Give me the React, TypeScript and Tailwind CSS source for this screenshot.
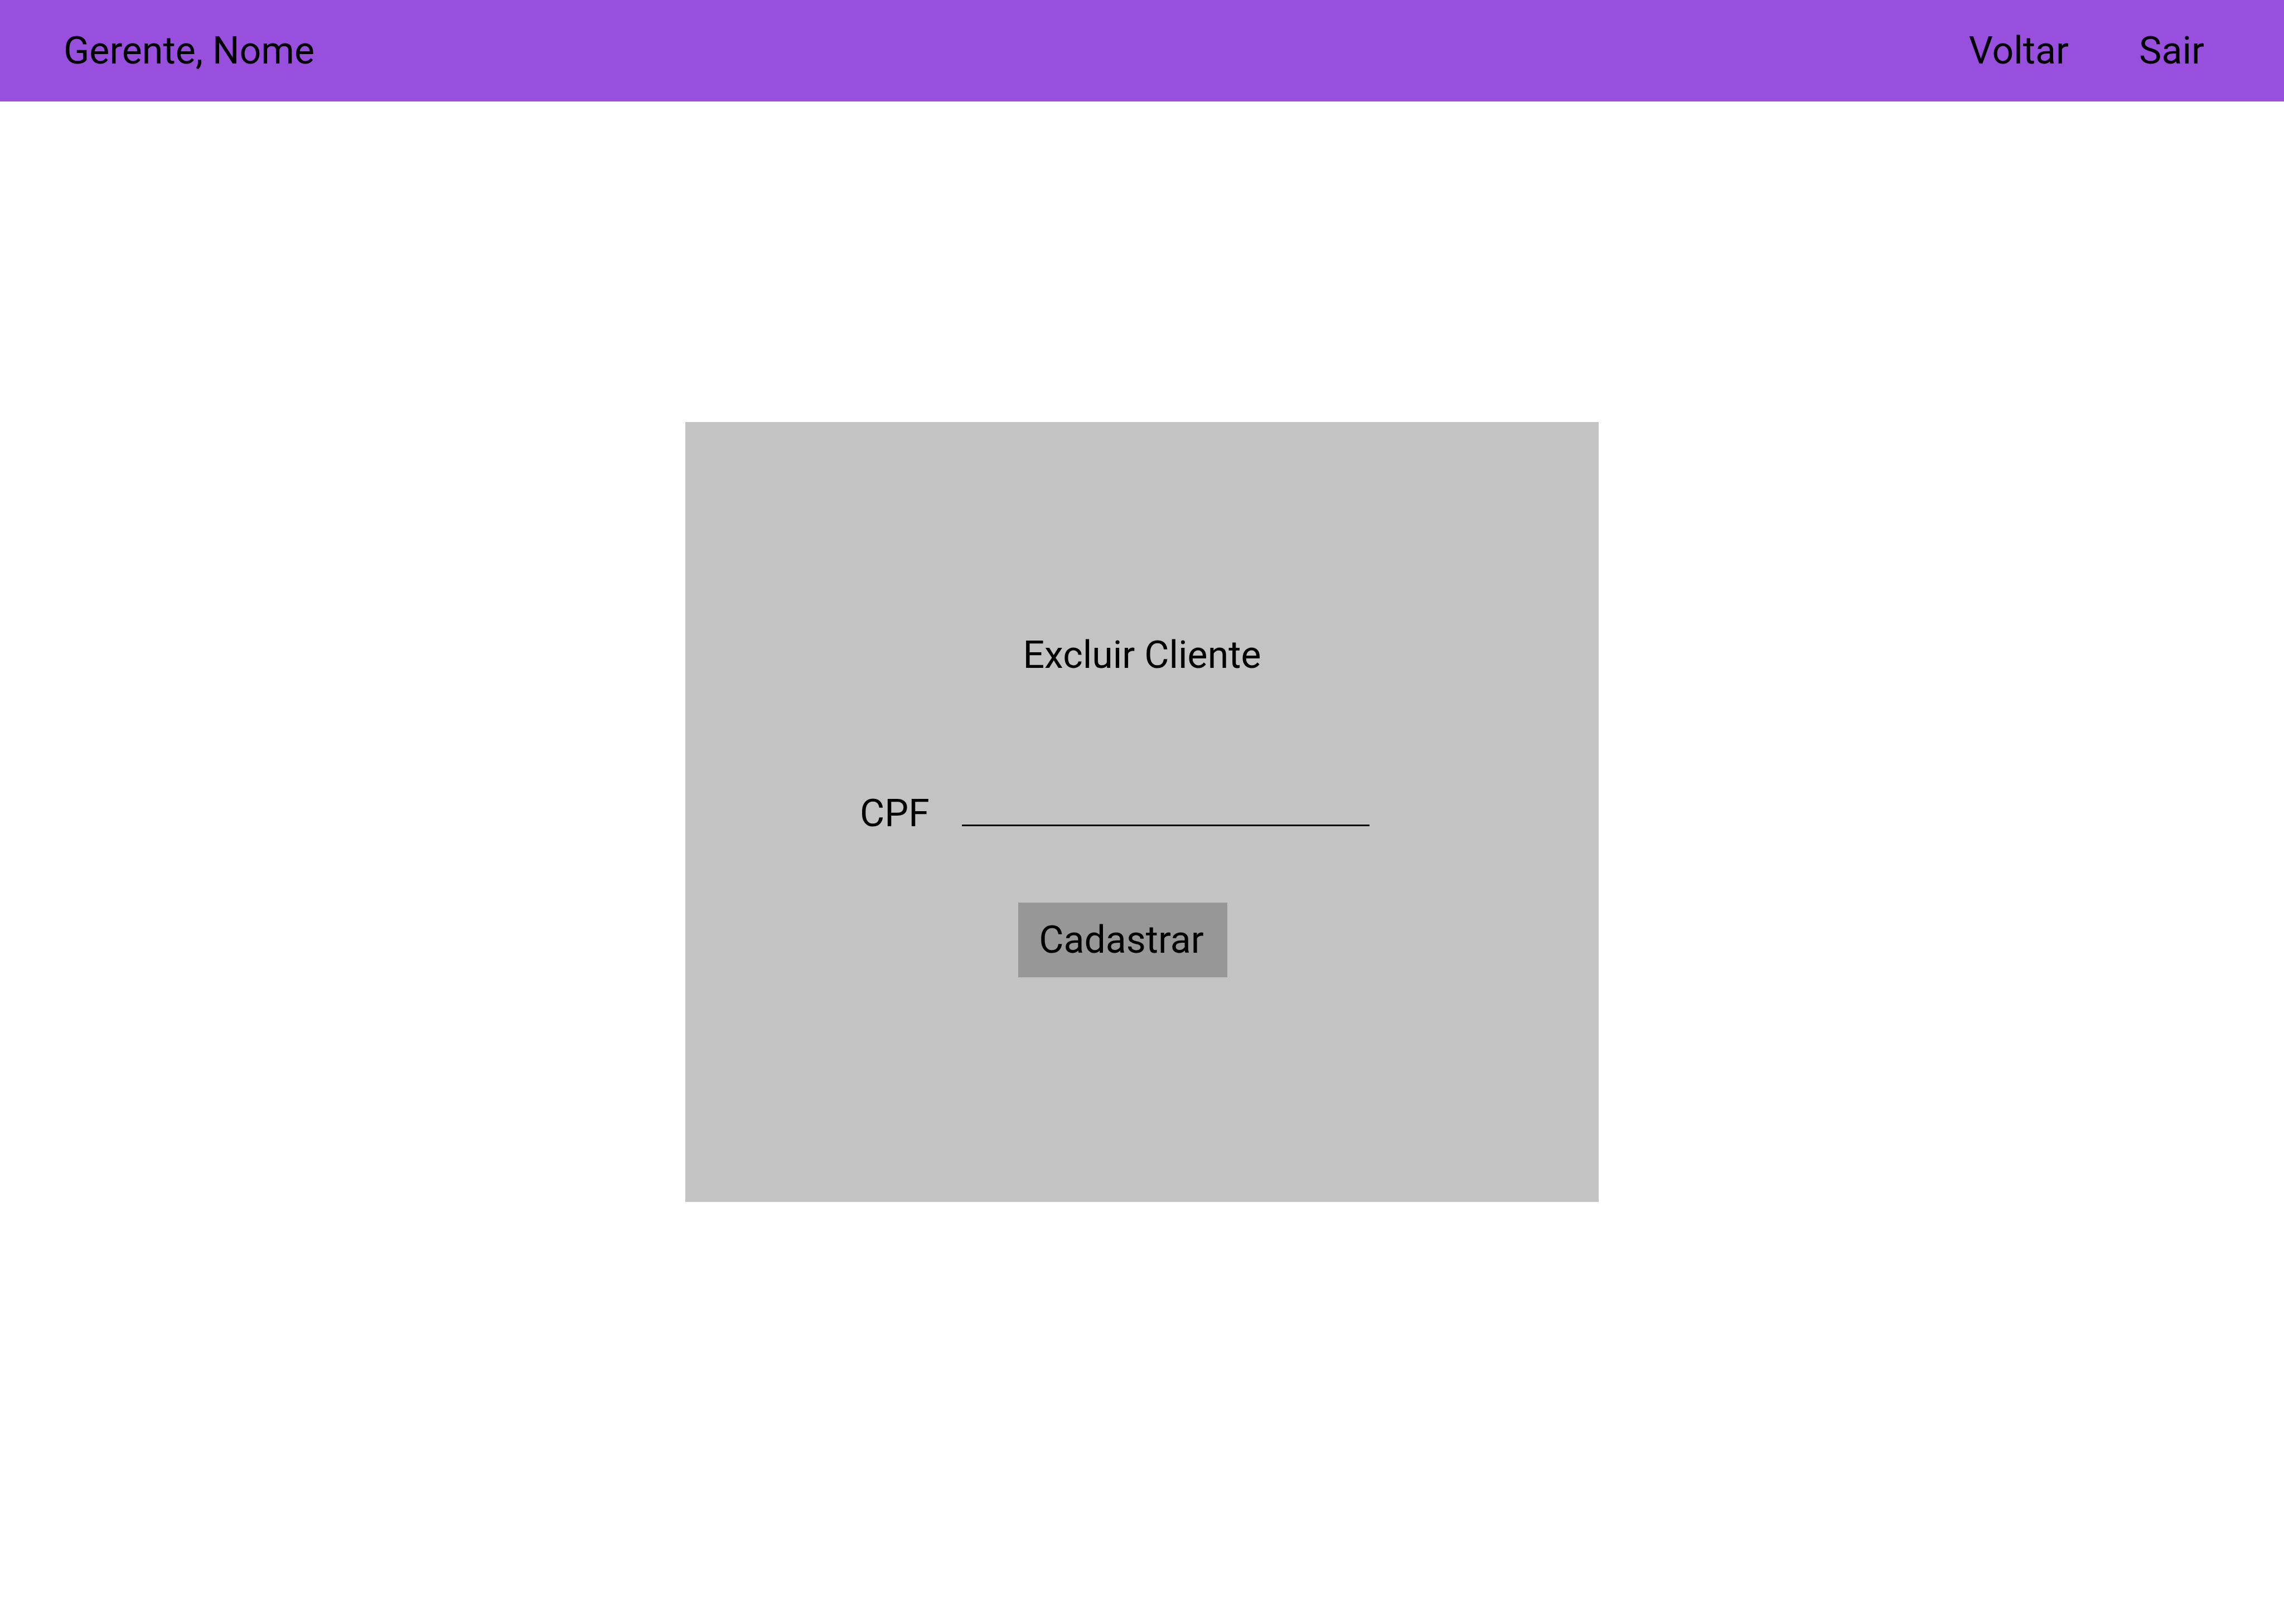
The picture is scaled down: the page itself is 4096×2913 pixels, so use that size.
export default function App() {
  return (
    <div className="flex min-h-screen flex-col bg-white font-['Roboto',sans-serif] text-[68px] leading-[80px] text-black">
      <header className="flex items-center justify-between bg-[#994fde] py-[51px] pr-[143px] pl-[114px]">
        <p>Gerente, Nome</p>
        <nav className="flex gap-[126px]">
          <a href="#voltar">Voltar</a>
          <a href="#sair">Sair</a>
        </nav>
      </header>

      <main className="flex flex-1 items-center justify-center pb-[182px]">
        <form className="flex w-2/5 flex-col items-center bg-[#c3c3c3] pt-[378px] pb-[403px]">
          <h1>Excluir Cliente</h1>

          <div className="mt-[204px] mr-[98px] flex items-start gap-[58px]">
            <label htmlFor="cpf">CPF</label>
            <input
              id="cpf"
              name="cpf"
              type="text"
              className="h-[63px] w-[731px] border-b-3 border-black bg-transparent outline-none"
            />
          </div>

          <button
            type="button"
            className="mt-[120px] mr-[69px] bg-[#979797] py-[27px] pr-[42px] pl-[37px]"
          >
            Cadastrar
          </button>
        </form>
      </main>
    </div>
  );
}
